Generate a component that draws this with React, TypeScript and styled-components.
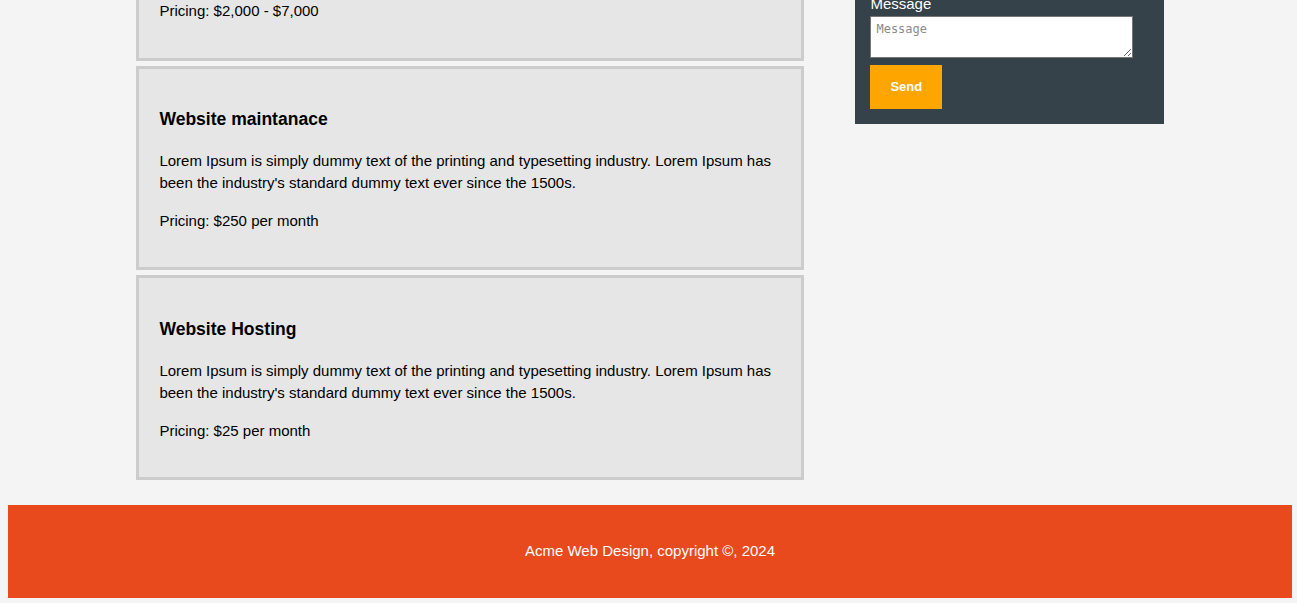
import styled, { createGlobalStyle } from 'styled-components';

const services = [
  { title: 'Website maintanace', price: '$250 per month' },
  { title: 'Website Hosting', price: '$25 per month' },
];

const lorem =
  "Lorem Ipsum is simply dummy text of the printing and typesetting industry. Lorem Ipsum has been the industry's standard dummy text ever since the 1500s.";

function App() {
  return (
    <>
      <GlobalStyle />
      <Container>
        <Main>
          <ServiceCard $clipped>
            <Text>Pricing: $2,000 - $7,000</Text>
          </ServiceCard>
          {services.map((s) => (
            <ServiceCard key={s.title}>
              <h3>{s.title}</h3>
              <Text>{lorem}</Text>
              <Text>Pricing: {s.price}</Text>
            </ServiceCard>
          ))}
        </Main>
        <Sidebar>
          <QuoteForm onSubmit={(e) => e.preventDefault()}>
            <Label htmlFor="message">Message</Label>
            <MessageBox id="message" placeholder="Message" />
            <SendButton type="submit">Send</SendButton>
          </QuoteForm>
        </Sidebar>
      </Container>
      <Footer>
        <p>Acme Web Design, copyright ©, 2024</p>
      </Footer>
    </>
  );
}

const GlobalStyle = createGlobalStyle`
  html {
    overflow: hidden;
  }
  body {
    margin: 0 5px 0 8px;
    background-color: #f4f4f4;
    font-family: "Liberation Sans", Arial, sans-serif;
    font-size: 15px;
    line-height: 1.5;
    color: #000;
  }
`;

const Container = styled.div`
  width: 80%;
  margin: 0 auto;
  display: flex;
  justify-content: space-between;
  align-items: flex-start;
`;

const Main = styled.section`
  width: 65%;
`;

const ServiceCard = styled.div<{ $clipped?: boolean }>`
  background-color: #e6e6e6;
  border: 3px solid #cccccc;
  padding: 20px;
  margin-bottom: 5px;
  ${(p) =>
    p.$clipped &&
    `
    border-top: none;
    padding-top: 0;
    & > p:first-child { margin-top: 0; }
  `}
`;

const Text = styled.p`
  margin: 15px 0;
`;

const Sidebar = styled.aside`
  width: 30%;
  background-color: #35424a;
  color: #ffffff;
  padding: 0 15px 15px;
  box-sizing: border-box;
`;

const QuoteForm = styled.form`
  margin: 0;
`;

const Label = styled.label`
  display: block;
  margin-top: -7px;
`;

const MessageBox = styled.textarea`
  display: block;
  width: 90%;
  height: 30px;
  padding: 5px;
  margin: 0 0 7px;
  border: 1px solid #767676;
  font-family: "DejaVu Sans Mono", "Liberation Mono", monospace;
  font-size: 12px;
  &::placeholder {
    color: #8a8a8a;
  }
`;

const SendButton = styled.button`
  height: 44px;
  padding: 0 20px;
  border: 0;
  background-color: #ffa500;
  color: #ffffff;
  font-family: "Liberation Sans", Arial, sans-serif;
  font-size: 13px;
  font-weight: bold;
`;

const Footer = styled.footer`
  margin-top: 20px;
  padding: 20px;
  background-color: #e8491d;
  color: #ffffff;
  text-align: center;
  p {
    margin: 15px 0;
  }
`;

export default App;
